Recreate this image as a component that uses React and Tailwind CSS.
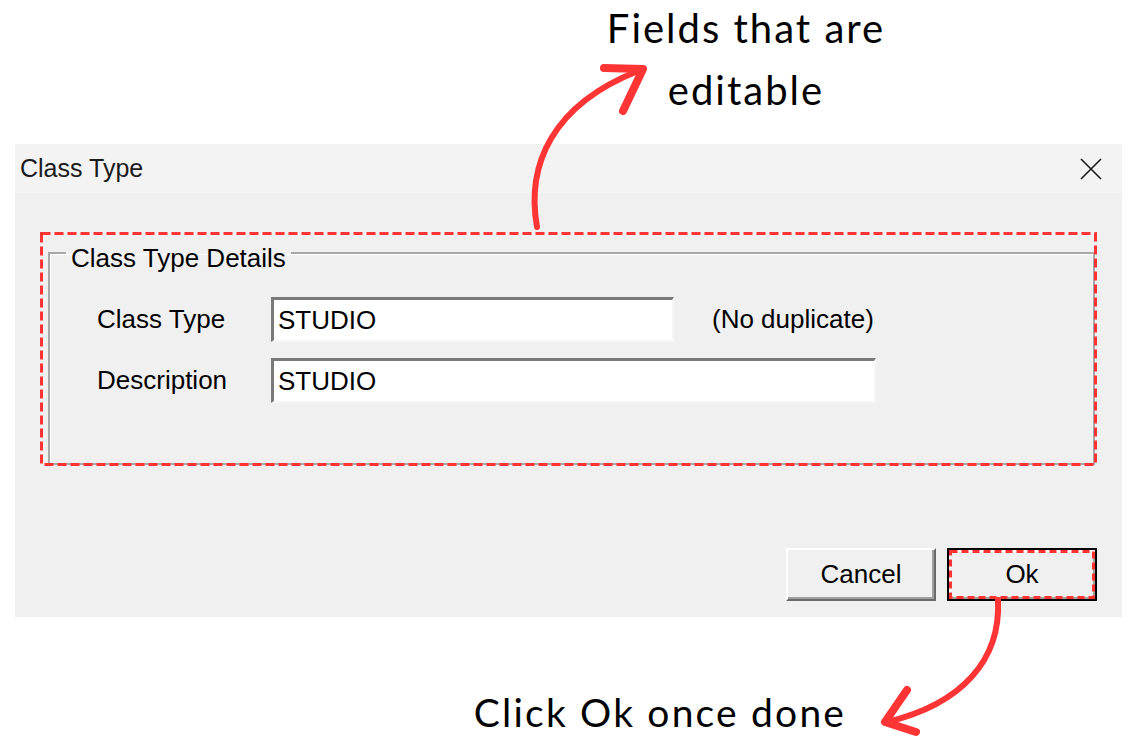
import React from 'react';

const dialogFont = { fontFamily: '"Liberation Sans", Arial, sans-serif' };
const noteFont = { fontFamily: 'Lato, "Open Sans", sans-serif' };

const TextBox = ({ value, width }) => (
  <div
    className={`h-[45px] ${width} bg-white border-solid border-t-[3px] border-l-[3px] border-r-2 border-b-2 border-t-[#7a7a7a] border-l-[#7a7a7a] border-r-[#f6f6f6] border-b-[#f6f6f6] flex items-center pl-[4px] text-[26px] text-black`}
  >
    {value}
  </div>
);

const DashedFrame = ({ dash }) => (
  <svg className="absolute inset-0 w-full h-full pointer-events-none">
    <rect
      x="1.5"
      y="1.5"
      width="calc(100% - 3px)"
      height="calc(100% - 3px)"
      fill="none"
      stroke="#ff3333"
      strokeWidth="3"
      strokeDasharray={dash}
    />
  </svg>
);

const Arrows = () => (
  <svg className="absolute inset-0 pointer-events-none" width="1135" height="738" viewBox="0 0 1135 738">
    <g fill="none" stroke="#ff3535" strokeLinecap="round" strokeLinejoin="round">
      <path d="M537 227 C526 165 552 105 638 71" strokeWidth="6" />
      <path d="M604 68 L643 69 L623 111" strokeWidth="8" />
      <path d="M998 600 C1001 660 962 704 887 722" strokeWidth="6" />
      <path d="M907 690 L885 722 L916 732" strokeWidth="8" />
    </g>
  </svg>
);

const App = () => {
  return (
    <div className="relative w-[1135px] h-[738px] bg-white overflow-hidden">
      {/* top note */}
      <div className="h-[144px] flex flex-col">
        <div className="ml-[596px] w-[300px] -mt-[3px] text-center text-black text-[40px] leading-[62px] tracking-[2px]" style={noteFont}>
          <div>Fields that are</div>
          <div>editable</div>
        </div>
      </div>

      {/* dialog */}
      <div className="ml-[15px] w-[1107px] h-[473px] bg-[#f0f0f0] flex flex-col" style={dialogFont}>
        <div className="h-[49px] bg-[#f3f3f3] flex items-center justify-between pl-[5px] pr-[20px]">
          <span className="text-[25px] text-[#1a1a1a]">Class Type</span>
          <svg width="22" height="22" viewBox="0 0 22 22">
            <path d="M1 1 L21 21 M21 1 L1 21" stroke="#1a1a1a" strokeWidth="1.6" />
          </svg>
        </div>

        <div className="flex-1 flex flex-col pl-[25px] pr-[25px] pt-[39px] pb-[16px]">
          <div className="relative h-[234px] pl-[8px] pr-[2px] pt-[1px] pb-[1px]">
            <fieldset className="h-full border-2 border-[#a8a8a8] shadow-[inset_1px_1px_0_#ffffff] m-0 p-0">
              <legend className="ml-[16px] px-[5px] pt-[10px] text-[26px] leading-[30px] text-black">
                Class Type Details
              </legend>
              <div className="mt-[24px] flex flex-col gap-[16px] pl-[47px]">
                <div className="flex items-center">
                  <span className="w-[174px] text-[26px] text-black">Class Type</span>
                  <TextBox value="STUDIO" width="w-[403px]" />
                  <span className="ml-[38px] text-[26px] text-black">(No duplicate)</span>
                </div>
                <div className="flex items-center">
                  <span className="w-[174px] text-[26px] text-black">Description</span>
                  <TextBox value="STUDIO" width="w-[605px]" />
                </div>
              </div>
            </fieldset>
            <DashedFrame dash="9 4" />
          </div>

          <div className="flex-1 flex items-end justify-end gap-[11px]">
            <button className="w-[150px] h-[53px] bg-[#f0f0f0] border-2 border-t-white border-l-white border-r-[#696969] border-b-[#696969] shadow-[inset_-2px_-2px_0_#a0a0a0] text-[26px] text-black">
              Cancel
            </button>
            <button className="relative w-[150px] h-[53px] bg-[#f0f0f0] border-2 border-black shadow-[inset_2px_2px_0_#ffffff,inset_-2px_-2px_0_#a0a0a0] text-[26px] text-black">
              Ok
              <DashedFrame dash="7 4" />
            </button>
          </div>
        </div>
      </div>

      {/* bottom note */}
      <div className="h-[121px] pt-[73px]">
        <div className="ml-[460px] w-[400px] text-center text-black text-[39px] leading-[44px] tracking-[2.2px]" style={noteFont}>
          Click Ok once done
        </div>
      </div>

      <Arrows />
    </div>
  );
};

export default App;
